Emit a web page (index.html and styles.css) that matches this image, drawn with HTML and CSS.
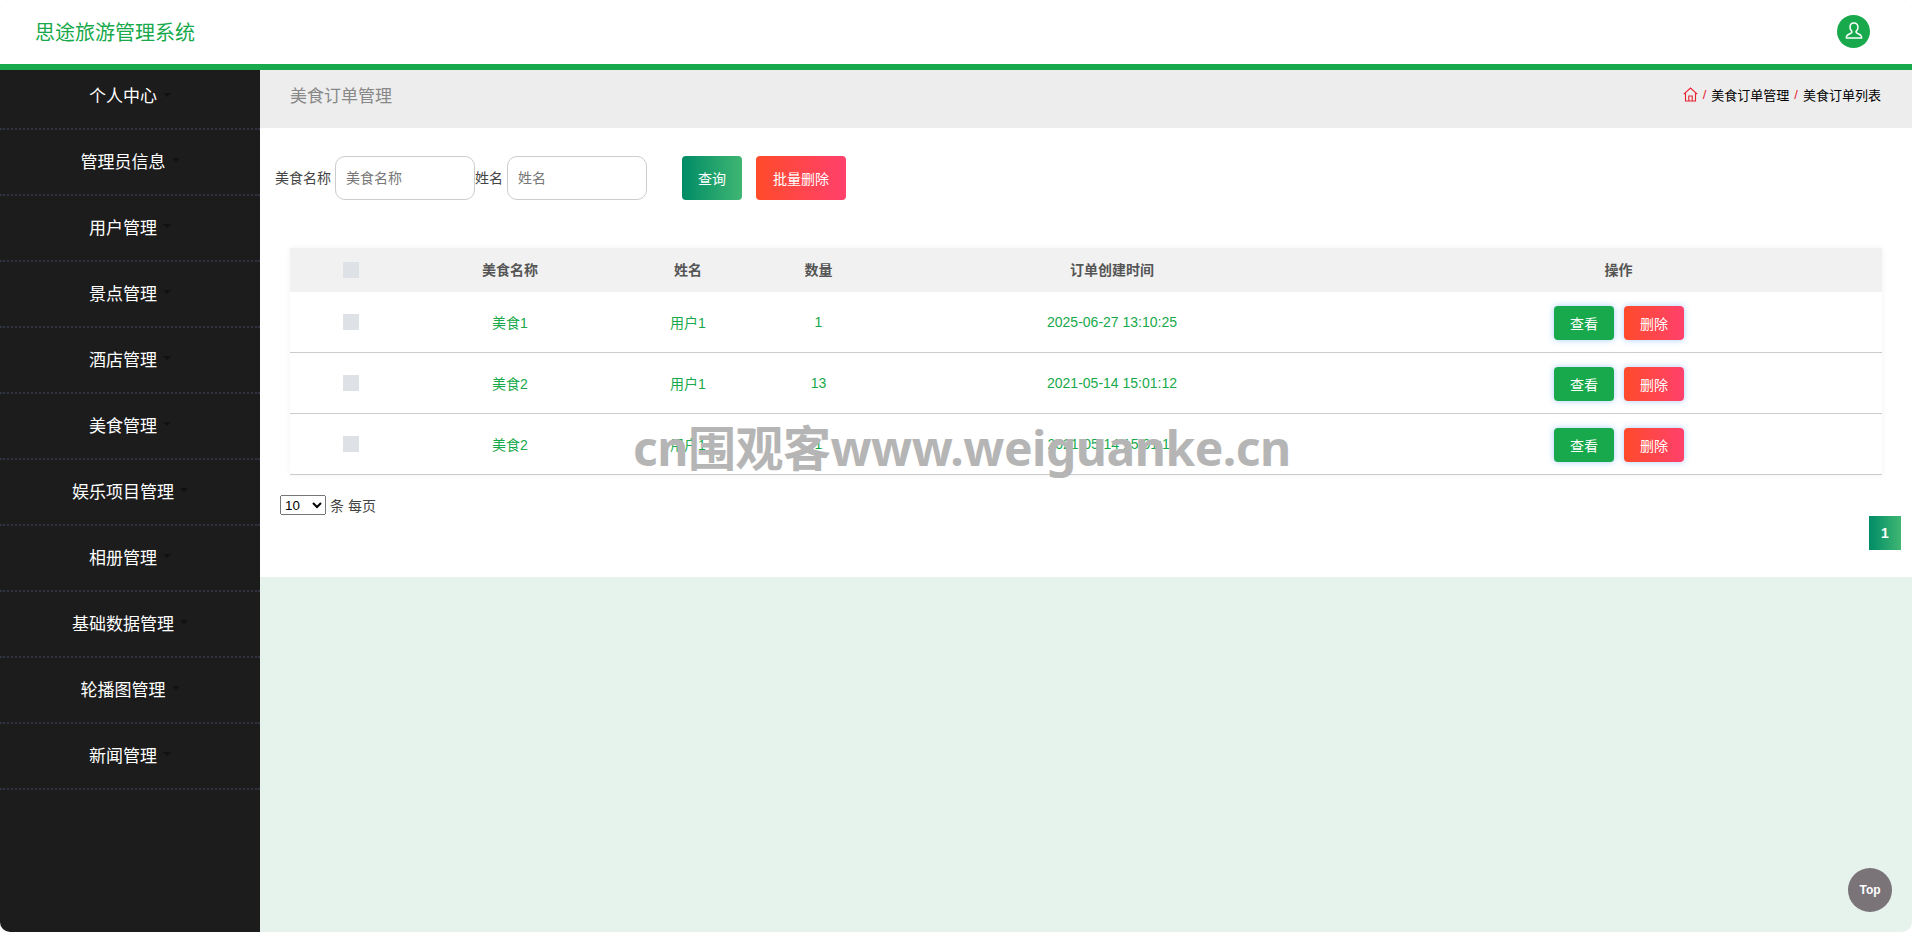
FILE: index.html
```html
<!DOCTYPE html>
<html lang="zh-CN">
<head>
    <meta charset="UTF-8">
    <meta name="viewport" content="width=device-width, initial-scale=1.0">
    <title>思途旅游管理系统</title>
    <link rel="stylesheet" href="styles.css">
</head>
<body>

<div class="page">
    <!-- 顶部 -->
    <header class="topbar">
        <div class="logo">思途旅游管理系统</div>
        <div class="avatar">
            <svg width="20" height="20" viewBox="0 0 20 20" fill="none" stroke="#fff" stroke-width="1.5" stroke-linejoin="round">
                <path d="M10 2c-2.5 0-4 1.8-4 4.2 0 1.7.7 3 1.7 3.9.3.3.3 1.3-.1 1.7-.8.8-3.6 1.5-4.6 2.8-.5.7-.7 1.6-.7 2.4h15.4c0-.8-.2-1.7-.7-2.4-1-1.3-3.8-2-4.6-2.8-.4-.4-.4-1.4-.1-1.7 1-.9 1.7-2.2 1.7-3.9C14 3.800 12.500 2 10 2z"/>
            </svg>
        </div>
    </header>

    <div class="layout">
        <!-- 左侧菜单 -->
        <ul class="sidebar">
            <li class="side-item"><span>个人中心</span><i class="caret"></i></li>
            <li class="side-item"><span>管理员信息</span><i class="caret"></i></li>
            <li class="side-item"><span>用户管理</span><i class="caret"></i></li>
            <li class="side-item"><span>景点管理</span><i class="caret"></i></li>
            <li class="side-item"><span>酒店管理</span><i class="caret"></i></li>
            <li class="side-item"><span>美食管理</span><i class="caret"></i></li>
            <li class="side-item"><span>娱乐项目管理</span><i class="caret"></i></li>
            <li class="side-item"><span>相册管理</span><i class="caret"></i></li>
            <li class="side-item"><span>基础数据管理</span><i class="caret"></i></li>
            <li class="side-item"><span>轮播图管理</span><i class="caret"></i></li>
            <li class="side-item"><span>新闻管理</span><i class="caret"></i></li>
        </ul>

        <main class="main">
            <div class="title-bar">
                <h3 class="page-title">美食订单管理</h3>
                <div class="crumbs">
                    <svg class="home-icon" width="15" height="15" viewBox="0 0 15 15" fill="none" stroke="#e8202f" stroke-width="1.1">
                        <path d="M.8 7.2 7.500 1l6.700 6.200M2.500 6.200V14h10V6.200M5.800 14V9h3.400v5"/>
                    </svg>
                    <span class="sep">/</span>
                    <span>美食订单管理</span>
                    <span class="sep">/</span>
                    <span>美食订单列表</span>
                </div>
            </div>

            <div class="panel">
                <!-- 搜索 -->
                <div class="search">
                    <label>美食名称</label>
                    <input class="search-input" type="text" placeholder="美食名称">
                    <label>姓名</label>
                    <input class="search-input" type="text" placeholder="姓名">
                    <button class="btn btn-query">查询</button>
                    <button class="btn btn-red btn-batch">批量删除</button>
                </div>

                <!-- 列表 -->
                <table class="table">
                    <thead>
                        <tr>
                            <th class="col-check"><span class="check"></span></th>
                            <th class="col-name">美食名称</th>
                            <th class="col-user">姓名</th>
                            <th class="col-num">数量</th>
                            <th class="col-time">订单创建时间</th>
                            <th>操作</th>
                        </tr>
                    </thead>
                    <tbody>
                        <tr>
                            <td><span class="check"></span></td>
                            <td>美食1</td>
                            <td>用户1</td>
                            <td>1</td>
                            <td>2025-06-27 13:10:25</td>
                            <td><div class="ops"><button class="btn btn-small btn-green">查看</button><button class="btn btn-small btn-red">删除</button></div></td>
                        </tr>
                        <tr>
                            <td><span class="check"></span></td>
                            <td>美食2</td>
                            <td>用户1</td>
                            <td>13</td>
                            <td>2021-05-14 15:01:12</td>
                            <td><div class="ops"><button class="btn btn-small btn-green">查看</button><button class="btn btn-small btn-red">删除</button></div></td>
                        </tr>
                        <tr>
                            <td><span class="check"></span></td>
                            <td>美食2</td>
                            <td>用户1</td>
                            <td>1</td>
                            <td>2021-05-14 15:01:11</td>
                            <td><div class="ops"><button class="btn btn-small btn-green">查看</button><button class="btn btn-small btn-red">删除</button></div></td>
                        </tr>
                    </tbody>
                </table>

                <div class="page-size">
                    <select>
                        <option>10</option>
                    </select>
                    <span>条 每页</span>
                </div>
                <div class="pager">
                    <a class="page-num">1</a>
                </div>
            </div>
        </main>
    </div>

    <div class="watermark">cn围观客www.weiguanke.cn</div>
    <div class="to-top">Top</div>
</div>

</body>
</html>
```

FILE: styles.css
```css
* {
    box-sizing: border-box;
}
html, body {
    margin: 0;
    height: 100%;
    overflow: hidden;
    background: #fff;
}
body {
    font-family: "Liberation Sans", "Noto Sans CJK SC", sans-serif;
    font-size: 14px;
    color: #444;
}
.page {
    position: relative;
    height: 100vh;
    overflow: hidden;
    border-radius: 10px;
    background: #e6f3ec;
}
.topbar {
    position: relative;
    z-index: 2;
    display: flex;
    justify-content: space-between;
    align-items: center;
    height: 70px;
    padding: 0 42px 2px 35px;
    background: #fff;
    border-bottom: 6px solid #17a94b;
}
.logo {
    font-size: 20px;
    color: #17a94b;
}
.avatar {
    display: flex;
    justify-content: center;
    align-items: center;
    width: 33px;
    height: 33px;
    border-radius: 50%;
    background: #17a94b;
}
.layout {
    display: flex;
    height: calc(100vh - 70px);
}
.sidebar {
    flex: none;
    width: 260px;
    margin: 0;
    padding: 0;
    list-style: none;
    background: #1c1c1c;
}
.side-item {
    display: flex;
    justify-content: center;
    align-items: center;
    gap: 6px;
    height: 66px;
    padding-bottom: 4px;
    font-size: 17px;
    color: #fff;
    border-bottom: 2px dotted #2f3342;
}
.side-item:first-child {
    height: 60px;
    align-items: flex-start;
    padding-top: 12px;
    padding-bottom: 0;
}
.side-item:first-child .caret {
    margin-top: 11px;
}
.caret {
    width: 0;
    height: 0;
    border-left: 4px solid transparent;
    border-right: 4px solid transparent;
    border-top: 4px solid #111;
}
.main {
    flex: 1;
    min-width: 0;
}
.title-bar {
    display: flex;
    justify-content: space-between;
    align-items: center;
    height: 58px;
    padding: 0 31px 10px 30px;
    background: #ededed;
}
.page-title {
    margin: 0;
    font-size: 17px;
    font-weight: normal;
    color: #888;
}
.crumbs {
    display: flex;
    align-items: center;
    gap: 5px;
    font-size: 13px;
    color: #000;
}
.sep {
    color: #e8202f;
}
.home-icon {
    display: block;
}
.panel {
    padding: 28px 11px 27px 15px;
    background: #fff;
}
.search {
    display: flex;
    align-items: center;
    height: 44px;
}
.search label {
    padding-bottom: 2px;
    color: #444;
}
.search-input {
    width: 140px;
    height: 44px;
    margin-left: 4px;
    padding: 0 10px;
    font-family: inherit;
    font-size: 14px;
    border: 1px solid #ccc;
    border-radius: 10px;
    outline: none;
}
.search-input::placeholder {
    color: #777;
}
.btn {
    height: 34px;
    padding: 0;
    font-family: inherit;
    font-size: 14px;
    color: #fff;
    border: none;
    border-radius: 4px;
}
.btn-query {
    width: 60px;
    height: 44px;
    margin-left: 35px;
    background: linear-gradient(90deg, #008c67, #3fb672);
}
.btn-red {
    background: linear-gradient(90deg, #ff4b2b, #ff416c);
}
.btn-batch {
    width: 90px;
    height: 44px;
    margin-left: 14px;
}
.btn-green {
    background: #17a94b;
}
.btn-small {
    width: 60px;
    box-shadow: 0 0 6px rgba(80, 160, 255, 0.5);
}
.ops {
    display: flex;
    justify-content: center;
    gap: 10px;
    margin-top: 2px;
    padding-left: 1px;
}
.table {
    width: 1592px;
    margin: 48px 0 0 15px;
    border-collapse: separate;
    border-spacing: 0;
    table-layout: fixed;
    box-shadow: 0 0 6px rgba(0, 0, 0, 0.06);
}
.table th {
    height: 44px;
    padding: 0 0 2px;
    font-size: 14px;
    color: #555;
    background: #f1f1f1;
}
.table td {
    height: 61px;
    padding: 0;
    text-align: center;
    color: #17a94b;
    border-bottom: 1px solid #ccc;
}
.col-check {
    width: 122px;
}
.col-name {
    width: 196px;
}
.col-user {
    width: 160px;
}
.col-num {
    width: 101px;
}
.col-time {
    width: 486px;
}
.check {
    display: block;
    width: 16px;
    height: 16px;
    margin: 0 auto;
    background: #dee2e6;
}
.table th .check {
    margin-top: 2px;
}
.page-size {
    display: flex;
    align-items: center;
    gap: 4px;
    margin: 20px 0 0 5px;
    color: #444;
}
.page-size select {
    width: 46px;
    height: 20px;
    font-family: inherit;
    font-size: 13.333px;
}
.pager {
    display: flex;
    justify-content: flex-end;
    margin-top: 1px;
}
.page-num {
    display: flex;
    justify-content: center;
    align-items: center;
    width: 32px;
    height: 34px;
    font-weight: bold;
    font-size: 14px;
    color: #fff;
    background: linear-gradient(90deg, #008c67, #3fb672);
}
.watermark {
    position: absolute;
    left: 633px;
    top: 413px;
    font-family: "Noto Sans", "Noto Sans CJK SC", sans-serif;
    font-size: 48px;
    font-weight: bold;
    line-height: 70px;
    letter-spacing: -0.5px;
    color: #b5b5b5;
    white-space: nowrap;
}
.to-top {
    position: absolute;
    right: 20px;
    bottom: 20px;
    display: flex;
    justify-content: center;
    align-items: center;
    width: 44px;
    height: 44px;
    font-size: 12px;
    font-weight: bold;
    color: #fff;
    border-radius: 50%;
    background: #7a7478;
}
```
